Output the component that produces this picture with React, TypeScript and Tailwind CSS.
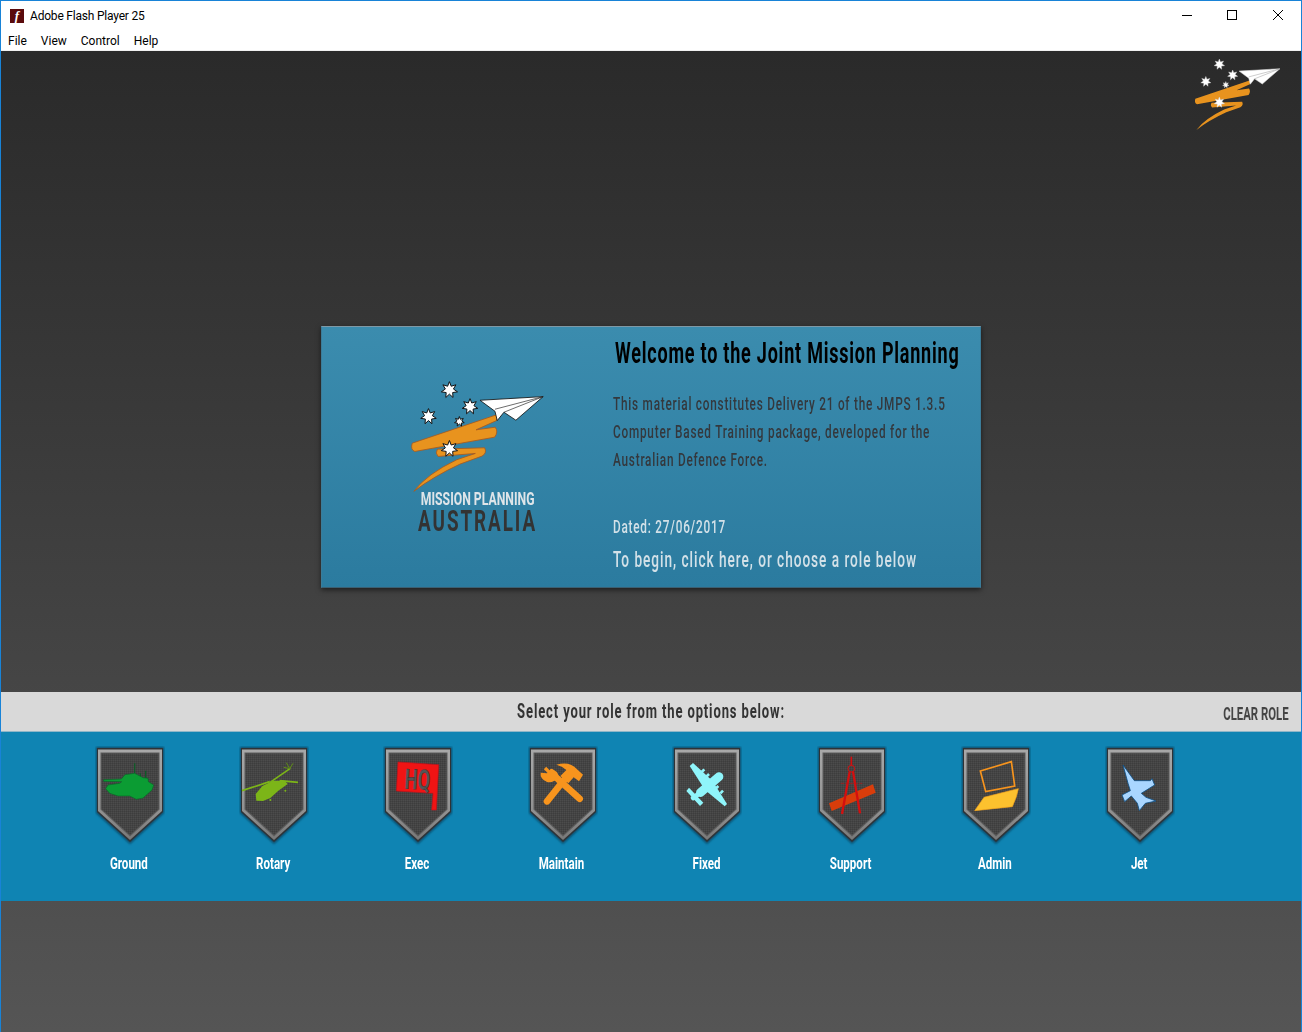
const condensed = "font-['Roboto',sans-serif] inline-block whitespace-nowrap";

const Star = ({ x, y, r, outline }: { x: number; y: number; r: number; outline: boolean }) => {
  const pts = Array.from({ length: 14 }, (_, i) => {
    const rad = i % 2 === 0 ? r : r * 0.5;
    const a = (Math.PI * i) / 7 - Math.PI / 2;
    return `${x + rad * Math.cos(a)},${y + rad * Math.sin(a)}`;
  }).join(" ");
  return <polygon points={pts} fill="#fff" stroke={outline ? "#111" : "#cfcfcf"} strokeWidth={outline ? 3 : 2} />;
};

// coordinates are 3x the big logo's on-screen pixels
const LogoMark = ({ className, outline }: { className: string; outline: boolean }) => (
  <svg viewBox="90 30 405 340" className={className}>
    <path
      d="M352 134 L96 220 Q90 240 104 245 L344 202 Q356 186 346 172 L288 180 L350 152 Z"
      fill="#e8931e"
      stroke={outline ? "#a8591e" : "none"}
      strokeWidth="2.5"
    />
    <path
      d="M172 238 L314 234 Q322 250 306 259 L240 283 Q160 320 101 365 Q140 313 230 270 L286 251 L174 260 Q164 250 172 238 Z"
      fill="#e8931e"
      stroke={outline ? "#a8591e" : "none"}
      strokeWidth="2.5"
    />
    <polygon points="300,91 490,80 408,151 372,127 352,152 345,124" fill="#fff" stroke={outline ? "#111" : "#ddd"} strokeWidth="2.5" />
    <path d="M345 118 L490 80 M372 127 L490 80" stroke={outline ? "#222" : "#888"} strokeWidth="2" />
    <Star x={208} y={60} r={25} outline={outline} />
    <Star x={270} y={110} r={24} outline={outline} />
    <Star x={145} y={140} r={24} outline={outline} />
    <Star x={238} y={155} r={15} outline={outline} />
    <Star x={208} y={237} r={25} outline={outline} />
  </svg>
);

const Shield = ({ children }: { children: React.ReactNode }) => (
  <svg width="70" height="100" viewBox="-2 -2 70 100" className="block">
    <defs>
      <linearGradient id="frame" x1="0" y1="0" x2="0" y2="1">
        <stop offset="0" stopColor="#a8a8a8" />
        <stop offset="0.7" stopColor="#909090" />
        <stop offset="1" stopColor="#787878" />
      </linearGradient>
      <pattern id="weave" width="2" height="2" patternUnits="userSpaceOnUse">
        <rect width="2" height="2" fill="#444" />
        <rect width="1" height="1" fill="#4c4c4c" />
        <rect x="1" y="1" width="1" height="1" fill="#3d3d3d" />
      </pattern>
      <filter id="soft" x="-10%" y="-10%" width="120%" height="120%">
        <feGaussianBlur stdDeviation="0.9" />
      </filter>
    </defs>
    <polygon points="-1,-1 67,-1 67,65 33,96 -1,65" fill="#0b4a68" filter="url(#soft)" />
    <polygon points="0,0 66,0 66,64 33,94 0,64" fill="#2f3336" />
    <polygon points="1,1.5 65,1.5 65,63 33,92 1,63" fill="url(#frame)" />
    <polygon points="3.5,4.5 62.5,4.5 62.5,61.5 33,88.5 3.5,61.5" fill="#5c5c5c" />
    <polygon points="4.5,5.5 61.5,5.5 61.5,61 33,87 4.5,61" fill="url(#weave)" />
    {children}
  </svg>
);

const GroundIcon = () => (
  <g transform="translate(-17.3 -8) scale(.3333)">
    <path d="M165 70V105M198 92V118M182 100V116" stroke="#0b5d25" strokeWidth="3.5" />
    <path
      d="M72 119L125 117L136 104L165 100L190 113L205 115L206 125L222 135L217 150L190 174L170 178L150 168L115 168L90 160L78 146L85 135L120 130L126 125L72 124Z"
      fill="#0b9c33"
      stroke="#0a6a28"
      strokeWidth="2"
    />
  </g>
);

const RotaryIcon = () => (
  <g transform="translate(-161.3 -8) scale(.3333)">
    <path d="M487 152L570 125M632 85L570 128M600 122L655 127" stroke="#7cb518" strokeWidth="5" />
    <path d="M620 68L630 86L640 70M630 86L612 82" stroke="#5f8f16" strokeWidth="3" fill="none" />
    <path d="M530 182L528 162L548 138L580 122L615 122L624 132L596 152L572 174L550 183Z" fill="#7cb518" />
    <circle cx="572" cy="180" r="3" fill="#7cb518" />
    <circle cx="617" cy="152" r="3" fill="#7cb518" />
  </g>
);

const ExecIcon = () => (
  <g transform="translate(-15.3 -8) scale(.3333)">
    <polygon points="85,66 207,74 200,210 186,210 190,160 80,153" fill="#f01414" stroke="#c0101a" strokeWidth="2" />
    <text
      x="104"
      y="146"
      fontSize="84"
      fontWeight="700"
      textLength="76"
      lengthAdjust="spacingAndGlyphs"
      fill="#555"
      stroke="#2a2a2a"
      strokeWidth="1"
      transform="rotate(3 104 146)"
      fontFamily="Roboto, sans-serif"
    >
      HQ
    </text>
  </g>
);

const MaintainIcon = () => (
  <g transform="translate(-160.3 -8) scale(.3333)">
    <path d="M532 184L596 104" stroke="#f7941d" strokeWidth="20" strokeLinecap="round" />
    <path d="M630 176L552 106" stroke="#f7941d" strokeWidth="20" strokeLinecap="round" />
    <path d="M560 74Q600 62 622 88L640 104L628 124L612 112L596 130L572 108L590 90Q578 78 560 74Z" fill="#f7941d" />
    <path d="M545 84L532 100L513 98Q510 116 532 126Q552 130 566 110Q566 96 556 92L544 84Z" fill="#f7941d" />
    <path d="M526 84L540 98" stroke="#f7941d" strokeWidth="10" />
  </g>
);

const FixedIcon = () => (
  <g transform="translate(-14.3 -8) scale(.3333)">
    <polygon points="90,78 100,69 158,122 202,192 195,199 136,150" fill="#8ff5fb" />
    <path d="M178 110L122 158" stroke="#8ff5fb" strokeWidth="26" strokeLinecap="round" />
    <path d="M122 158L100 174" stroke="#8ff5fb" strokeWidth="14" strokeLinecap="round" />
    <polygon points="80,153 88,143 131,188 121,198" fill="#8ff5fb" />
    <path d="M126 96L134 88M140 110L148 102M168 146L176 138M182 160L190 152" stroke="#8ff5fb" strokeWidth="8" />
  </g>
);

const SupportIcon = () => (
  <g transform="translate(-159.3 -8) scale(.3333)">
    <polygon points="508,190 640,133 648,158 516,213" fill="#d93d0b" />
    <path d="M575 50V76" stroke="#d40f0f" strokeWidth="5" />
    <circle cx="575" cy="86" r="10" fill="none" stroke="#d40f0f" strokeWidth="3" />
    <path d="M570 95L547 222M580 95L601 220" stroke="#d40f0f" strokeWidth="7" />
    <path d="M543 130H608" stroke="#b41818" strokeWidth="2" strokeDasharray="10 4" />
  </g>
);

const AdminIcon = () => (
  <g transform="translate(-13.3 -58) scale(.3333)">
    <polygon points="75,362 103,322 206,296 200,320 188,350" fill="#fcc12e" stroke="#f7a41d" strokeWidth="2" />
    <polygon points="92,243 185,215 195,288 108,305" fill="none" stroke="#f7941d" strokeWidth="5" />
  </g>
);

const JetIcon = () => (
  <g transform="translate(-158.3 -58) scale(.3333)">
    <polygon
      points="523,225 557,272 605,272 610,266 618,285 578,310 592,322 622,333 590,340 572,362 566,340 548,318 528,335 520,315 545,302 538,280"
      fill="#a9d6ff"
      stroke="#0f4f86"
      strokeWidth="2.5"
    />
  </g>
);

const roles = [
  { label: "Ground", icon: <GroundIcon /> },
  { label: "Rotary", icon: <RotaryIcon /> },
  { label: "Exec", icon: <ExecIcon /> },
  { label: "Maintain", icon: <MaintainIcon /> },
  { label: "Fixed", icon: <FixedIcon /> },
  { label: "Support", icon: <SupportIcon /> },
  { label: "Admin", icon: <AdminIcon /> },
  { label: "Jet", icon: <JetIcon /> },
];

const App = () => {
  return (
    <div className="flex h-[1032px] w-[1302px] flex-col overflow-hidden border-x border-t border-[#1883d7] bg-white font-['Roboto',sans-serif] text-black">
      <div className="flex h-[29px] items-center pl-[9px]">
        <div className="flex h-[14px] w-[14px] items-center justify-center bg-[#5a0a0c] font-['Liberation_Serif',serif] text-[13px] font-bold italic leading-none text-white">
          f
        </div>
        <span className="ml-[6px] text-[12px] tracking-[-0.2px]">Adobe Flash Player 25</span>
        <div className="ml-auto flex items-center">
          <svg width="12" height="12" viewBox="0 0 12 12" className="mr-[33px]">
            <path d="M1 5.5H11" stroke="#000" />
          </svg>
          <svg width="12" height="12" viewBox="0 0 12 12" className="mr-[34px]">
            <rect x="1.5" y="0.5" width="9" height="9" fill="none" stroke="#000" />
          </svg>
          <svg width="12" height="12" viewBox="0 0 12 12" className="mr-[17px]">
            <path d="M1 0L11 10M11 0L1 10" stroke="#000" />
          </svg>
        </div>
      </div>
      <div className="flex h-[21px] items-center gap-[14px] border-b border-[#f0f0f0] pt-[2px] pl-[7px] text-[12px]">
        <span>File</span>
        <span>View</span>
        <span>Control</span>
        <span>Help</span>
      </div>

      <div className="flex flex-1 flex-col bg-linear-to-b from-[#2a2a2a] to-[#555555]">
        <div className="flex h-[275px] justify-end pr-[20px] pt-[7px]">
          <LogoMark className="h-[73px] w-[87px]" outline={false} />
        </div>

        <div className="mx-auto flex h-[262px] w-[660px] border border-x-[#3b7c99] border-t-[#7f99a6] border-b-[#3a5f72] bg-linear-to-b from-[#3b8cae] to-[#2b7b9f] shadow-[0_2px_5px_rgba(0,0,0,0.55)]">
          <div className="flex w-[291px] shrink-0 flex-col items-center pl-[20px] pt-[53px]">
            <LogoMark className="h-[113px] w-[135px] shrink-0" outline />
            <span className={`${condensed} -mt-[3px] origin-center text-[18px] font-bold leading-[18px] text-[#dfe5e9] [transform:scaleX(.68)]`}>
              MISSION PLANNING
            </span>
            <span className={`${condensed} mt-[1px] origin-center text-[29px] font-bold leading-[24px] tracking-[3px] text-[#333] [transform:scaleX(.65)]`}>
              AUSTRALIA
            </span>
          </div>
          <div className="flex min-w-0 flex-1 flex-col">
            <h1 className={`${condensed} ml-[2px] mt-[9px] origin-left text-[30px] font-bold leading-[34px] tracking-[1.3px] text-black [transform:scaleX(.6)]`}>
              Welcome to the Joint Mission Planning
            </h1>
            <p className={`${condensed} mt-[20px] origin-left text-[19px] font-medium leading-[28px] tracking-[1.25px] text-[#34383d] [transform:scaleX(.62)]`}>
              This material constitutes Delivery 21 of the JMPS 1.3.5
              <br />
              Computer Based Training package, developed for the
              <br />
              Australian Defence Force.
            </p>
            <span className={`${condensed} mt-[41px] origin-left text-[19px] font-medium leading-[24px] tracking-[1.25px] text-[#d3e1e8] [transform:scaleX(.62)]`}>
              Dated: 27/06/2017
            </span>
            <span className={`${condensed} mt-[6px] origin-left text-[22px] font-medium leading-[30px] tracking-[1.57px] text-[#d3e1e8] [transform:scaleX(.62)]`}>
              To begin, click here, or choose a role below
            </span>
          </div>
        </div>

        <div className="relative mt-[104px] flex h-[40px] items-center justify-center border-b border-[#8fb6c8] bg-[#d9d9d9]">
          <span className={`${condensed} origin-center text-[21px] font-bold tracking-[1.4px] text-[#333] [transform:scaleX(.62)]`}>
            Select your role from the options below:
          </span>
          <span className={`${condensed} absolute right-[12px] top-[8px] origin-right text-[18px] font-bold text-[#444] [transform:scaleX(.63)]`}>
            CLEAR ROLE
          </span>
        </div>

        <div className="flex h-[169px] bg-[#0f84b3] pl-[56.5px] pt-[14px]">
          {roles.map((role) => (
            <div key={role.label} className="flex w-[144.4px] flex-col items-center">
              <Shield>{role.icon}</Shield>
              <span className={`${condensed} mt-[5px] -ml-[2px] origin-center text-[17px] font-bold leading-[24px] text-white [transform:scaleX(.68)]`}>
                {role.label}
              </span>
            </div>
          ))}
        </div>
      </div>
    </div>
  );
};

export default App;
